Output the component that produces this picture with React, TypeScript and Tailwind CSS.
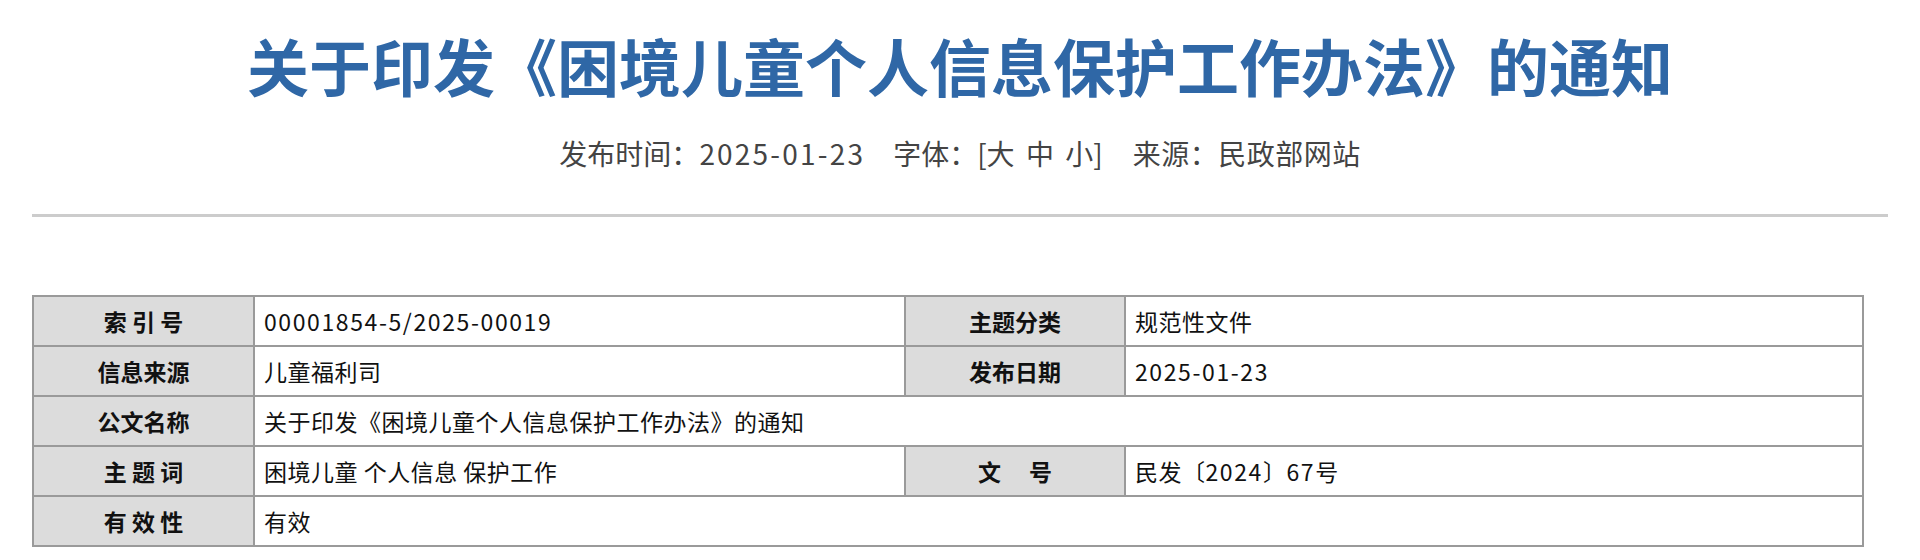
const labelCls =
  'bg-[#dcdcdc] flex items-center justify-center text-[23px] font-bold text-[#111]';
const valueCls = 'bg-white flex items-center pl-[9px] text-[23px] text-[#111] tracking-[0.5px]';

function Num({ children }: { children: React.ReactNode }) {
  return <span className="tracking-[1.6px]">{children}</span>;
}

export default function App() {
  return (
    <div className="min-h-screen bg-white px-8 font-['Noto_Sans_CJK_SC',sans-serif]">
      <h1 className="pt-[28px] text-center text-[62px] leading-[74px] font-bold text-[#2f67a6]">
        关于印发《困境儿童个人信息保护工作办法》的通知
      </h1>

      <div className="mt-[33px] flex justify-center text-[28px] leading-[36px] text-[#444]">
        <span>
          发布时间：<span className="tracking-[2.2px]">2025-01-23</span>
        </span>
        <span className="ml-[28px] [word-spacing:5px]">字体：[大 中 小]</span>
        <span className="ml-[30px] tracking-[0.5px]">来源：民政部网站</span>
      </div>

      <div className="mt-[43px] h-[3px] bg-[#cccccc]" />

      <div className="mt-[78px] w-fit grid grid-cols-[219px_649px_218px_736px] auto-rows-[48px] gap-[2px] p-[2px] bg-[#9a9a9a]">
        <div className={labelCls}>索 引 号</div>
        <div className={valueCls}>
          <Num>00001854-5/2025-00019</Num>
        </div>
        <div className={labelCls}>主题分类</div>
        <div className={valueCls}>规范性文件</div>

        <div className={labelCls}>信息来源</div>
        <div className={valueCls}>儿童福利司</div>
        <div className={labelCls}>发布日期</div>
        <div className={valueCls}>
          <Num>2025-01-23</Num>
        </div>

        <div className={labelCls}>公文名称</div>
        <div className={`${valueCls} col-span-3`}>关于印发《困境儿童个人信息保护工作办法》的通知</div>

        <div className={labelCls}>主 题 词</div>
        <div className={valueCls}>困境儿童 个人信息 保护工作</div>
        <div className={labelCls}>文　 号</div>
        <div className={valueCls}>
          民发〔<Num>2024</Num>〕<Num>67</Num>号
        </div>

        <div className={labelCls}>有 效 性</div>
        <div className={`${valueCls} col-span-3`}>有效</div>
      </div>
    </div>
  );
}
